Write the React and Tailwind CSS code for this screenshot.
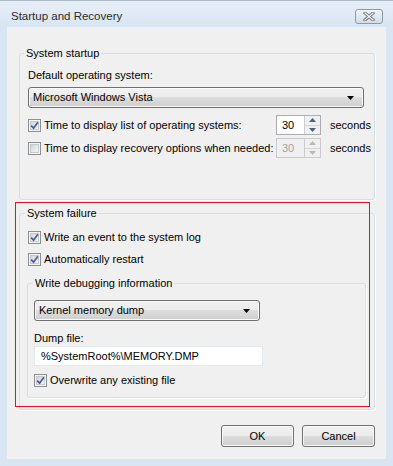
import React from "react";

const btnBg =
  "bg-[linear-gradient(to_bottom,#f2f2f2_0%,#ebebeb_50%,#dddddd_50%,#cfcfcf_100%)]";

function Checkbox({ checked }) {
  return (
    <span className="relative flex h-[13px] w-[13px] shrink-0 border border-[#8e8f8f] bg-[#f4f4f4] p-[1px]">
      <span className="h-full w-full border border-[#c6cbd2] bg-[linear-gradient(135deg,#cfd4da,#f7f7f7)]" />
      {checked && (
        <svg className="absolute left-[1px] top-[1px]" width="9" height="9" viewBox="0 0 9 9">
          <path d="M1.2 4.6 L3.6 7.2 L7.9 1.2" stroke="#4a5c9c" strokeWidth="1.7" fill="none" />
        </svg>
      )}
    </span>
  );
}

function CheckRow({ checked, children, className }) {
  return (
    <div className={"flex h-[20px] items-center " + (className || "")}>
      <Checkbox checked={checked} />
      <span className="ml-[3px] whitespace-nowrap">{children}</span>
    </div>
  );
}

function Select({ text, className }) {
  return (
    <div
      className={
        "flex h-[21px] items-center justify-between rounded-[3px] border border-[#707070] pl-[4px] pr-[9px] shadow-[inset_0_0_0_1px_#fafafa] " +
        btnBg +
        " " +
        className
      }
    >
      <span className="whitespace-nowrap">{text}</span>
      <svg width="7" height="4" viewBox="0 0 7 4">
        <path d="M0 0 H7 L3.5 4 Z" fill="#000" />
      </svg>
    </div>
  );
}

function Spinner({ disabled }) {
  const arrow = disabled ? "#b9b9b9" : "#4d6185";
  return (
    <div
      className={
        disabled
          ? "flex h-[20px] w-[45px] shrink-0 border border-[#c9cbce] bg-[#f0f0f0] text-[#a3a3a3]"
          : "flex h-[20px] w-[45px] shrink-0 border border-[#abadb3] bg-white text-black"
      }
    >
      <span className="flex-1 pl-[5px] leading-[18px]">30</span>
      <div className="flex w-[16px] flex-col border-l border-[#c9cbce] bg-[#f0f0f0]">
        <div className="flex flex-1 items-center justify-center border-b border-[#d6d6d6]">
          <svg width="7" height="4" viewBox="0 0 7 4">
            <path d="M0 4 H7 L3.5 0 Z" fill={arrow} />
          </svg>
        </div>
        <div className="flex flex-1 items-center justify-center">
          <svg width="7" height="4" viewBox="0 0 7 4">
            <path d="M0 0 H7 L3.5 4 Z" fill={arrow} />
          </svg>
        </div>
      </div>
    </div>
  );
}

function Button({ children }) {
  return (
    <button
      className={
        "h-[22px] w-[73px] rounded-[3px] border border-[#707070] shadow-[inset_0_0_0_1px_#f8f8f8] " +
        btnBg
      }
    >
      {children}
    </button>
  );
}

export default function App() {
  return (
    <div className="relative flex h-[466px] w-[393px] flex-col border-t border-[#aeb9c6] bg-[#d9e5f3] font-['Liberation_Sans',Arial,sans-serif] text-[11px] leading-[15px] text-black">
      {/* title bar */}
      <div className="flex h-[26px] items-start justify-between bg-[linear-gradient(to_bottom,#e6eef8,#d9e5f3)] pl-[11px] pr-[10px] pt-[8px]">
        <span className="text-[11.5px] text-[#2b2b2b]">Startup and Recovery</span>
        <div className="flex h-[15px] w-[28px] items-center justify-center rounded-[3px] border border-[#8d99a8] bg-[linear-gradient(to_bottom,#eef3f9,#d3dde9)]">
          <svg width="12" height="9" viewBox="0 0 12 9">
            <path d="M2 1 L10 8 M10 1 L2 8" stroke="#6b7380" strokeWidth="3" strokeLinecap="square" />
            <path d="M2 1 L10 8 M10 1 L2 8" stroke="#ffffff" strokeWidth="1.2" strokeLinecap="square" />
          </svg>
        </div>
      </div>

      {/* client area */}
      <div className="mx-[7px] flex h-[432px] flex-col bg-[#f0f0f0] pl-[12px] pr-[11px] pt-[19px]">
        <fieldset className="min-w-0 rounded-[3px] border border-[#d5dfe5] pb-[41px] pl-[8px] pr-[10px] shadow-[1px_1px_0_#fff]">
          <legend className="-ml-[4px] px-[2px]">System startup</legend>
          <div className="mt-[7px]">Default operating system:</div>
          <Select text="Microsoft Windows Vista" className="mt-[4px]" />
          <div className="mt-[7px] flex h-[20px] items-center">
            <div className="flex w-[248px] shrink-0 items-center">
              <Checkbox checked />
              <span className="ml-[3px] whitespace-nowrap">Time to display list of operating systems:</span>
            </div>
            <Spinner />
            <span className="ml-[9px] whitespace-nowrap">seconds</span>
          </div>
          <div className="mt-[3px] flex h-[20px] items-center">
            <div className="flex w-[248px] shrink-0 items-center">
              <Checkbox />
              <span className="ml-[3px] whitespace-nowrap">Time to display recovery options when needed:</span>
            </div>
            <Spinner disabled />
            <span className="ml-[9px] whitespace-nowrap">seconds</span>
          </div>
        </fieldset>

        <fieldset className="mt-[6px] min-w-0 rounded-[3px] border border-[#d5dfe5] pb-[11px] pl-[8px] pr-[8px] shadow-[1px_1px_0_#fff]">
          <legend className="-ml-[3px] px-[2px]">System failure</legend>
          <CheckRow checked className="mt-[6px]">Write an event to the system log</CheckRow>
          <CheckRow checked className="mt-[2px]">Automatically restart</CheckRow>

          <fieldset className="-ml-[1px] mt-[7px] min-w-0 rounded-[3px] border border-[#d5dfe5] pb-[7px] pl-[6px] pr-[8px] shadow-[1px_1px_0_#fff]">
            <legend className="-ml-[1px] px-[2px]">Write debugging information</legend>
            <Select text="Kernel memory dump" className="mt-[9px] w-[226px]" />
            <div className="mt-[10px]">Dump file:</div>
            <div className="h-[20px] w-[229px] border border-[#e3e9ef] bg-white pl-[6px] leading-[18px]">
              %SystemRoot%\MEMORY.DMP
            </div>
            <CheckRow checked className="mt-[4px]">Overwrite any existing file</CheckRow>
          </fieldset>
        </fieldset>

        <div className="mt-[15px] flex justify-end gap-[8px]">
          <Button>OK</Button>
          <Button>Cancel</Button>
        </div>
      </div>

      {/* highlight annotation */}
      <div className="pointer-events-none absolute left-[15px] top-[201px] h-[205px] w-[355px] border border-[#e3141f]" />
    </div>
  );
}
